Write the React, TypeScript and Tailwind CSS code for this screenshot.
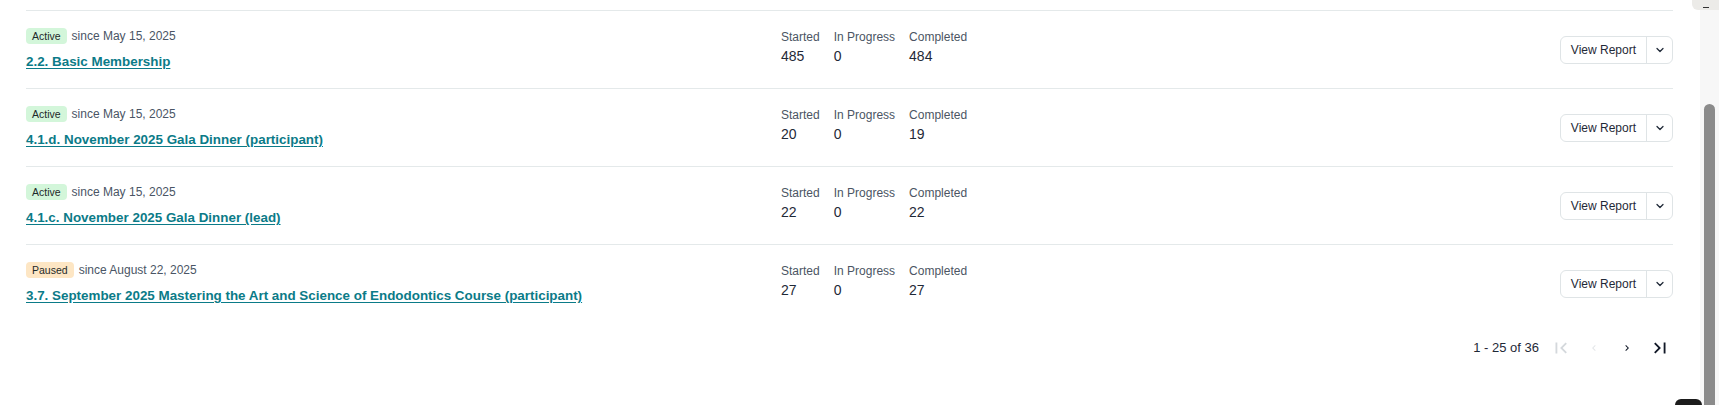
import React from 'react';
import { ChevronDown } from 'lucide-react';
import { MdFirstPage, MdLastPage, MdChevronLeft, MdChevronRight } from 'react-icons/md';

type Row = {
  status: 'Active' | 'Paused';
  since: string;
  title: string;
  started: number;
  inProgress: number;
  completed: number;
};

const rows: Row[] = [
  { status: 'Active', since: 'May 15, 2025', title: '2.2. Basic Membership', started: 485, inProgress: 0, completed: 484 },
  { status: 'Active', since: 'May 15, 2025', title: '4.1.d. November 2025 Gala Dinner (participant)', started: 20, inProgress: 0, completed: 19 },
  { status: 'Active', since: 'May 15, 2025', title: '4.1.c. November 2025 Gala Dinner (lead)', started: 22, inProgress: 0, completed: 22 },
  {
    status: 'Paused',
    since: 'August 22, 2025',
    title: '3.7. September 2025 Mastering the Art and Science of Endodontics Course (participant)',
    started: 27,
    inProgress: 0,
    completed: 27,
  },
];

function StatusBadge({ status }: { status: Row['status'] }) {
  const tone = status === 'Active' ? 'bg-[#d3f6da]' : 'bg-[#fde6c4]';
  return (
    <span className={`inline-flex h-4 items-center rounded-[4px] px-[6px] text-[10.5px] leading-4 text-[#1d2a2a] ${tone}`}>
      {status}
    </span>
  );
}

function Stat({ label, value }: { label: string; value: number }) {
  return (
    <div className="flex flex-col">
      <span className="text-xs leading-4 text-[#4b5563]">{label}</span>
      <span className="mt-[1px] text-sm leading-5 text-[#1f2937]">{value}</span>
    </div>
  );
}

function ReportRow({ row }: { row: Row }) {
  return (
    <div className="grid grid-cols-[755px_1fr_auto] items-center border-t border-[#e4e9ea] pb-[16px] pt-[17px]">
      {/* Name + status */}
      <div className="flex flex-col">
        <div className="flex items-center gap-[5px]">
          <StatusBadge status={row.status} />
          <span className="text-xs leading-4 text-[#4a5565]">since {row.since}</span>
        </div>
        <a
          href="#"
          className="mt-[8px] w-fit text-[13.4px] font-semibold leading-5 text-[#0b7b88] underline underline-offset-2"
        >
          {row.title}
        </a>
      </div>

      {/* Counts */}
      <div className="mt-[1px] flex gap-[14px] self-start">
        <Stat label="Started" value={row.started} />
        <Stat label="In Progress" value={row.inProgress} />
        <Stat label="Completed" value={row.completed} />
      </div>

      {/* Actions */}
      <div className="flex h-7 overflow-hidden rounded-md border border-[#dfe4e6] bg-white">
        <button className="px-[10px] text-xs text-[#1f2937]">View Report</button>
        <button className="flex w-[26px] items-center justify-center border-l border-[#dfe4e6] text-[#1f2937]">
          <ChevronDown size={12} strokeWidth={2.5} />
        </button>
      </div>
    </div>
  );
}

export default function App() {
  return (
    <div className="relative flex h-[405px] w-full overflow-hidden bg-white font-['Liberation_Sans',Arial,sans-serif]">
      <main className="flex-1 pl-[26px] pr-[27px] pt-[10px]">
        {rows.map((row, i) => (
          <ReportRow key={i} row={row} />
        ))}

        {/* Pagination */}
        <div className="-mr-[3px] mt-[10px] flex items-center justify-end">
          <span className="mr-[5px] text-[13px] text-[#1f2937]">1 - 25 of 36</span>
          <button className="flex h-8 w-[33px] items-center justify-center text-[#d4d8dc]">
            <MdFirstPage size={22} />
          </button>
          <button className="flex h-8 w-[33px] items-center justify-center text-[#e3e6e8]">
            <MdChevronLeft size={12} />
          </button>
          <button className="flex h-8 w-[33px] items-center justify-center text-[#111827]">
            <MdChevronRight size={12} />
          </button>
          <button className="flex h-8 w-[33px] items-center justify-center text-[#111827]">
            <MdLastPage size={22} />
          </button>
        </div>
      </main>

      {/* Scrollbar */}
      <aside className="flex w-[19px] flex-col bg-[#f7f7f7] pt-[104px]">
        <div className="ml-[4px] w-[11px] flex-1 rounded-t-full bg-[#8b8b8b]" />
      </aside>

      {/* Floating bits at the edges */}
      <div className="absolute right-0 top-0 flex h-[10px] w-[27px] items-end justify-center rounded-bl-md bg-[#ecebe8]">
        <span className="mb-[2px] block h-[1px] w-[6px] bg-[#333]" />
      </div>
      <div className="absolute bottom-0 left-[1675px] h-[6px] w-[27px] rounded-t-md bg-[#1c1c1c]" />
    </div>
  );
}
